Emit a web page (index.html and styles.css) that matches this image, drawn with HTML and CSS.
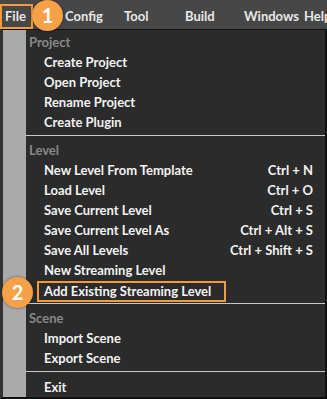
FILE: index.html
```html
<!DOCTYPE html>
<html lang="en">
<head>
    <meta charset="UTF-8">
    <title>File Menu</title>
    <link rel="stylesheet" href="styles.css">
</head>
<body>

    <!-- Top menu bar -->
    <div class="menubar">
        <span class="menubar-item file">File</span>
        <span class="badge badge-1">1</span>
        <span class="menubar-item config">Config</span>
        <span class="menubar-item tool">Tool</span>
        <span class="menubar-item build">Build</span>
        <span class="menubar-item windows">Windows</span>
        <span class="menubar-item help">Help</span>
    </div>

    <!-- Dropdown -->
    <div class="dropdown">
        <div class="gutter"></div>
        <div class="menu">
            <div class="group-title first">Project</div>
            <div class="item"><span>Create Project</span></div>
            <div class="item"><span>Open Project</span></div>
            <div class="item"><span>Rename Project</span></div>
            <div class="item"><span>Create Plugin</span></div>
            <div class="separator"></div>

            <div class="group-title">Level</div>
            <div class="item"><span>New Level From Template</span><span class="shortcut">Ctrl + N</span></div>
            <div class="item"><span>Load Level</span><span class="shortcut">Ctrl + O</span></div>
            <div class="item"><span>Save Current Level</span><span class="shortcut">Ctrl + S</span></div>
            <div class="item"><span>Save Current Level As</span><span class="shortcut">Ctrl + Alt + S</span></div>
            <div class="item"><span>Save All Levels</span><span class="shortcut">Ctrl + Shift + S</span></div>
            <div class="item"><span>New Streaming Level</span></div>
            <div class="item highlighted">
                <span class="badge badge-2">2</span>
                <span class="outline">Add Existing Streaming Level</span>
            </div>
            <div class="separator"></div>

            <div class="group-title">Scene</div>
            <div class="item"><span>Import Scene</span></div>
            <div class="item"><span>Export Scene</span></div>
            <div class="separator last"></div>

            <div class="item"><span>Exit</span></div>
        </div>
    </div>

</body>
</html>
```
FILE: styles.css
```css
/* General */
body { margin: 0; width: 327px; height: 399px; overflow: hidden; background-color: #474747; font-family: "Lato", "Open Sans", sans-serif; font-weight: 700; font-size: 13px; color: #f2f2f2; }

/* Menu bar */
.menubar { position: relative; height: 29px; white-space: nowrap; }
.menubar-item { position: absolute; top: 8px; color: #e8e8e8; }
.file { left: 0; top: 4px; width: 26px; height: 21px; padding-left: 3px; line-height: 21px; border: 2px solid #f39a3b; }
.config { left: 65px; }
.tool { left: 124px; }
.build { left: 185px; }
.windows { left: 244px; }
.help { left: 304px; }

/* Numbered callouts */
.badge { position: absolute; width: 31px; height: 31px; border-radius: 50%; background-color: #f6a047; color: #fff; font-size: 20px; font-weight: 700; text-align: center; line-height: 31px; box-shadow: 0 0 3px rgba(0, 0, 0, 0.45); }
.badge-1 { left: 32px; top: 0; }
.badge-2 { left: -24px; top: -3px; }

/* Dropdown */
.dropdown { display: flex; height: 367px; border: 2px solid #111; border-left: 3px solid #333; border-top-width: 1px; background-color: #2b2b2b; }
.gutter { width: 23px; background-color: #aaaaaa; }
.menu { flex: 1; }
.group-title { height: 20px; line-height: 20px; padding-left: 3px; color: #888888; }
.group-title.first { margin-top: 2px; }
.item { position: relative; height: 20px; line-height: 20px; padding: 0 12px 0 18px; display: flex; justify-content: space-between; }
.separator { height: 1px; margin: 3px 0 4px; background-color: #c8c8c8; }
.separator.last { margin: 3px 0 5px; }

/* Highlighted item */
.outline { box-sizing: border-box; margin: 1px 0 0 -7px; padding: 0 5px; width: 189px; height: 21px; line-height: 17px; border: 2px solid #f39a3b; }
```
